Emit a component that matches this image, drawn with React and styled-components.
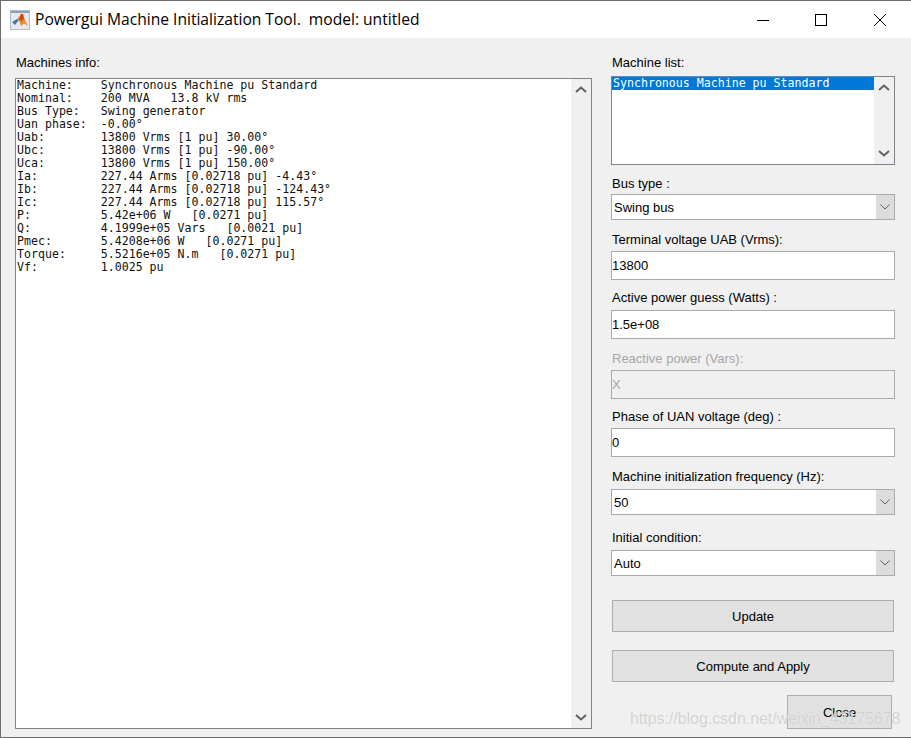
import styled, { createGlobalStyle } from 'styled-components';

const GlobalStyle = createGlobalStyle`
  html, body {
    margin: 0;
    padding: 0;
    background: #f0f0f0;
  }
  * {
    box-sizing: border-box;
  }
`;

const machineInfo = `Machine:    Synchronous Machine pu Standard
Nominal:    200 MVA   13.8 kV rms
Bus Type:   Swing generator
Uan phase:  -0.00°
Uab:        13800 Vrms [1 pu] 30.00°
Ubc:        13800 Vrms [1 pu] -90.00°
Uca:        13800 Vrms [1 pu] 150.00°
Ia:         227.44 Arms [0.02718 pu] -4.43°
Ib:         227.44 Arms [0.02718 pu] -124.43°
Ic:         227.44 Arms [0.02718 pu] 115.57°
P:          5.42e+06 W   [0.0271 pu]
Q:          4.1999e+05 Vars   [0.0021 pu]
Pmec:       5.4208e+06 W   [0.0271 pu]
Torque:     5.5216e+05 N.m   [0.0271 pu]
Vf:         1.0025 pu`;

const ArrowUp = () => (
  <svg width="12" height="7" viewBox="0 0 12 7">
    <path d="M1 6 L6 1.5 L11 6" fill="none" stroke="#606060" strokeWidth="2" />
  </svg>
);

const ArrowDown = () => (
  <svg width="12" height="7" viewBox="0 0 12 7">
    <path d="M1 1 L6 5.5 L11 1" fill="none" stroke="#606060" strokeWidth="2" />
  </svg>
);

const Chevron = () => (
  <svg width="10" height="6" viewBox="0 0 10 6">
    <path d="M0.5 0.5 L5 5 L9.5 0.5" fill="none" stroke="#606060" strokeWidth="1" />
  </svg>
);

const MatlabIcon = () => (
  <svg width="20" height="20" viewBox="0 0 20 20">
    <rect x="0" y="0" width="20" height="20" fill="#e6e9ee" />
    <rect x="0" y="1" width="20" height="2" fill="#8aa3bd" />
    <rect x="0.5" y="0.5" width="19" height="19" fill="none" stroke="#b9bcc0" />
    <path d="M2 12 L7 9 L9 10 L6.5 13 L5 15 Z" fill="#3f7ab8" />
    <path d="M7 9 L11 4 L13 4 L15 10 L18 16 L14 13.5 L11 16 L9 10 Z" fill="#ee8a1f" />
    <path d="M11 4 L13 4 L14 9 L11 11 L9 10 Z" fill="#c8491a" />
  </svg>
);

const Select = ({ value, gap }) => (
  <SelectBox $gap={gap}>
    <SelectValue>{value}</SelectValue>
    <SelectButton>
      <Chevron />
    </SelectButton>
  </SelectBox>
);

const App = () => {
  return (
    <>
      <GlobalStyle />
      <Window>
        <TitleBar>
          <MatlabIcon />
          <Title>Powergui Machine Initialization Tool.&nbsp; model: untitled</Title>
          <WindowButtons>
            <WindowButton>
              <svg width="12" height="12" viewBox="0 0 12 12">
                <path d="M0 6.5 H12" stroke="#000" strokeWidth="1" />
              </svg>
            </WindowButton>
            <WindowButton>
              <svg width="12" height="12" viewBox="0 0 12 12">
                <rect x="0.5" y="0.5" width="11" height="11" fill="none" stroke="#000" strokeWidth="1" />
              </svg>
            </WindowButton>
            <WindowButton>
              <svg width="12" height="12" viewBox="0 0 12 12">
                <path d="M0 0 L12 12 M12 0 L0 12" stroke="#000" strokeWidth="1" />
              </svg>
            </WindowButton>
          </WindowButtons>
        </TitleBar>
        <Body>
          <LeftColumn>
            <Label>Machines info:</Label>
            <InfoBox>
              <InfoText>{machineInfo}</InfoText>
              <ScrollBar>
                <ArrowUp />
                <ArrowDown />
              </ScrollBar>
            </InfoBox>
          </LeftColumn>
          <RightColumn>
            <Label>Machine list:</Label>
            <ListBox>
              <ListItems>
                <ListItem>Synchronous Machine pu Standard</ListItem>
              </ListItems>
              <ListScroll>
                <ArrowUp />
                <ArrowDown />
              </ListScroll>
            </ListBox>

            <Field $top={11}>
              <Label>Bus type :</Label>
              <Select value="Swing bus" gap={2} />
            </Field>
            <Field $top={12}>
              <Label>Terminal voltage UAB (Vrms):</Label>
              <TextInput $gap={3}>13800</TextInput>
            </Field>
            <Field $top={10}>
              <Label>Active power guess (Watts) :</Label>
              <TextInput $gap={4}>1.5e+08</TextInput>
            </Field>
            <Field $top={12}>
              <Label $disabled>Reactive power (Vars):</Label>
              <TextInput $gap={3} $disabled>X</TextInput>
            </Field>
            <Field $top={10}>
              <Label>Phase of UAN voltage (deg) :</Label>
              <TextInput $gap={3}>0</TextInput>
            </Field>
            <Field $top={12}>
              <Label>Machine initialization frequency (Hz):</Label>
              <Select value="50" gap={4} />
            </Field>
            <Field $top={15}>
              <Label>Initial condition:</Label>
              <Select value="Auto" gap={4} />
            </Field>

            <WideButton $top={24}>Update</WideButton>
            <WideButton $top={18}>Compute and Apply</WideButton>
            <CloseRow>
              <CloseButton>Close</CloseButton>
            </CloseRow>
          </RightColumn>
        </Body>
        <Watermark>https://blog.csdn.net/weixin_43175678</Watermark>
      </Window>
    </>
  );
};

export default App;

const Window = styled.div`
  position: relative;
  width: 911px;
  height: 738px;
  display: flex;
  flex-direction: column;
  background: #f0f0f0;
  border: 1px solid #6e6e6e;
  border-right: none;
  font-family: 'Liberation Sans', Arial, sans-serif;
  color: #000;
  overflow: hidden;
`;

const TitleBar = styled.div`
  height: 37px;
  flex: none;
  display: flex;
  align-items: center;
  padding-left: 9px;
  background: #fff;
`;

const Title = styled.div`
  margin-left: 5px;
  padding-bottom: 2px;
  font-family: 'Open Sans', 'Noto Sans', sans-serif;
  font-size: 15.6px;
  white-space: pre;
`;

const WindowButtons = styled.div`
  margin-left: auto;
  display: flex;
  padding-right: 2px;
`;

const WindowButton = styled.div`
  width: 58.5px;
  height: 37px;
  display: flex;
  align-items: center;
  justify-content: center;
`;

const Body = styled.div`
  flex: 1;
  display: flex;
  padding: 0 16px 8px 14px;
  min-height: 0;
`;

const LeftColumn = styled.div`
  width: 577px;
  display: flex;
  flex-direction: column;
  padding-top: 17px;
`;

const RightColumn = styled.div`
  width: 284px;
  margin-left: 19px;
  display: flex;
  flex-direction: column;
  padding-top: 17px;
`;

const Label = styled.div`
  height: 16px;
  padding-left: 1px;
  font-size: 13px;
  line-height: 16px;
  white-space: nowrap;
  color: ${(p) => (p.$disabled ? '#a6a6a6' : '#000')};
`;

const InfoBox = styled.div`
  flex: 1;
  display: flex;
  min-height: 0;
  margin-top: 7px;
  background: #fff;
  border: 1px solid #82828c;
`;

const InfoText = styled.pre`
  flex: 1;
  margin: 0;
  padding: 0 0 0 1px;
  font-family: 'DejaVu Sans Mono', 'Liberation Mono', monospace;
  font-size: 11.6px;
  line-height: 13px;
  color: #111;
`;

const ScrollBar = styled.div`
  width: 20px;
  flex: none;
  display: flex;
  flex-direction: column;
  align-items: center;
  justify-content: space-between;
  padding: 7px 0 7px;
  background: #f0f0f0;
`;

const ListBox = styled.div`
  height: 89px;
  margin-top: 5px;
  display: flex;
  background: #fff;
  border: 1px solid #82828c;
`;

const ListItems = styled.div`
  flex: 1;
`;

const ListItem = styled.div`
  height: 13px;
  padding-left: 1px;
  background: #0078d7;
  color: #fff;
  font-family: 'DejaVu Sans Mono', 'Liberation Mono', monospace;
  font-size: 11.6px;
  line-height: 13px;
  white-space: pre;
`;

const ListScroll = styled(ScrollBar)`
  padding: 7px 0 7px;
`;

const Field = styled.div`
  margin-top: ${(p) => p.$top}px;
  display: flex;
  flex-direction: column;
`;

const TextInput = styled.div`
  height: 29px;
  margin-top: ${(p) => p.$gap}px;
  display: flex;
  align-items: center;
  font-size: 13px;
  color: ${(p) => (p.$disabled ? '#a6a6a6' : '#000')};
  background: ${(p) => (p.$disabled ? '#f0f0f0' : '#fff')};
  border: 1px solid #a9a9b0;
`;

const SelectBox = styled.div`
  height: 26px;
  margin-top: ${(p) => p.$gap}px;
  display: flex;
  background: #fff;
  border: 1px solid #a9a9b0;
`;

const SelectValue = styled.div`
  flex: 1;
  padding-left: 2px;
  display: flex;
  align-items: center;
  font-size: 13px;
`;

const SelectButton = styled.div`
  width: 18px;
  display: flex;
  align-items: center;
  justify-content: center;
  background: #dcdcdc;
`;

const WideButton = styled.div`
  height: 32px;
  margin: ${(p) => p.$top}px 1px 0;
  display: flex;
  align-items: center;
  justify-content: center;
  font-size: 13px;
  background: #e1e1e1;
  border: 1px solid #adadad;
`;

const CloseRow = styled.div`
  margin-top: 13px;
  display: flex;
  justify-content: flex-end;
  padding-right: 3px;
`;

const CloseButton = styled.div`
  width: 105px;
  height: 34px;
  display: flex;
  align-items: center;
  justify-content: center;
  font-size: 13px;
  background: #e1e1e1;
  border: 1px solid #adadad;
`;

const Watermark = styled.div`
  position: absolute;
  left: 629px;
  top: 708px;
  font-size: 15.9px;
  line-height: 20px;
  white-space: nowrap;
  color: rgba(195, 195, 195, 0.75);
  text-shadow: 0 0 1px rgba(255, 255, 255, 0.9);
`;
